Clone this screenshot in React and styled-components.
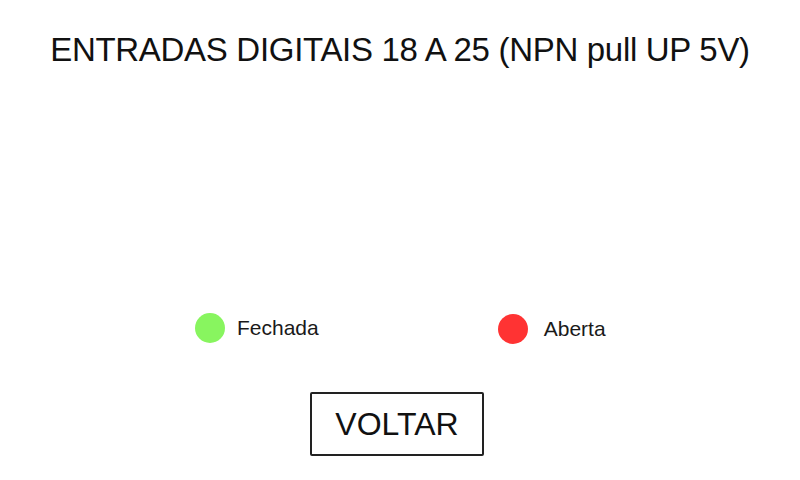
import React from 'react';
import styled, { createGlobalStyle } from 'styled-components';

const GlobalStyle = createGlobalStyle`
  html, body {
    margin: 0;
    padding: 0;
    background: #ffffff;
  }
  body {
    font-family: "Liberation Sans", Arial, sans-serif;
    color: #111111;
  }
`

const App = () => {
  return (
    <Screen>
      <GlobalStyle />
      <Title>ENTRADAS DIGITAIS 18 A 25 (NPN pull UP 5V)</Title>
      <Legend>
        <LegendItem offset={0} spacing={12}>
          <Dot color="#88f55f" />
          <Label>Fechada</Label>
        </LegendItem>
        <LegendItem offset={3} spacing={16}>
          <Dot color="#ff3333" />
          <Label>Aberta</Label>
        </LegendItem>
      </Legend>
      <BackButton>VOLTAR</BackButton>
    </Screen>
  );
};
export default App;

const Screen = styled.div`
  width: 800px;
  height: 480px;
  display: flex;
  flex-direction: column;
  align-items: center;
  box-sizing: border-box;
  padding-top: 30px;
  background: #ffffff;
`

const Title = styled.h1`
  margin: 0;
  font-weight: normal;
  font-size: 33px;
  line-height: 40px;
  letter-spacing: -0.3px;
  color: #111111;
  white-space: nowrap;
`

const Legend = styled.div`
  display: flex;
  align-self: stretch;
  padding-left: 195px;
  margin-top: 241px;
  gap: 179px;
`

const LegendItem = styled.div`
  display: flex;
  align-items: center;
  gap: ${props => props.spacing}px;
  margin-top: ${props => props.offset}px;
`

const Dot = styled.span`
  width: 30px;
  height: 30px;
  border-radius: 50%;
  background: ${props => props.color};
  flex-shrink: 0;
`

const Label = styled.span`
  font-size: 21px;
  color: #1a1a1a;
`

const BackButton = styled.button`
  margin-top: 48px;
  margin-right: 6px;
  width: 174px;
  height: 64px;
  box-sizing: border-box;
  border: 2px solid #222222;
  border-radius: 2px;
  background: #ffffff;
  font-family: "Liberation Sans", Arial, sans-serif;
  font-size: 32px;
  color: #111111;
  padding: 0;
  cursor: pointer;
`
